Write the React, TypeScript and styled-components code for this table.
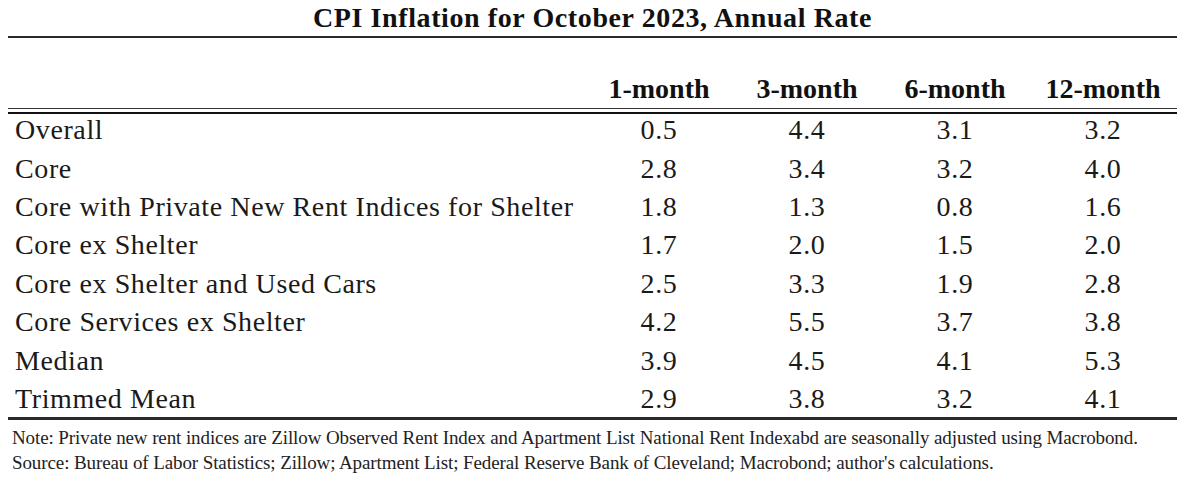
import React from "react";
import styled, { createGlobalStyle } from "styled-components";

interface Row {
  label: string;
  values: string[];
}

const serif = `"Liberation Serif", "Times New Roman", serif`;

const GlobalStyle = createGlobalStyle`
  html, body {
    margin: 0;
    padding: 0;
    background: #ffffff;
  }
`;

const Page = styled.div`
  width: 1186px;
  height: 490px;
  padding: 0 9px 0 8px;
  box-sizing: border-box;
  overflow: hidden;
  font-family: ${serif};
  color: #1a1a1a;
`;

const Title = styled.h1`
  margin: 0;
  height: 36px;
  font-family: ${serif};
  font-size: 28px;
  font-weight: bold;
  line-height: 36px;
  letter-spacing: 0.6px;
  text-align: center;
  color: #111;
`;

const Rule = styled.div<{ $thick?: number }>`
  height: ${(p) => p.$thick || 1}px;
  background: #2a2a2a;
`;

const DoubleRule = styled.div`
  border-top: 1px solid #333;
  border-bottom: 2px solid #111;
  height: 3px;
`;

const Grid = styled.div`
  display: grid;
  grid-template-columns: 577px repeat(4, 148px);
`;

const HeadRow = styled(Grid)`
  height: 70px;
  align-items: end;
`;

const HeadCell = styled.div`
  font-family: ${serif};
  font-size: 28px;
  font-weight: bold;
  text-align: center;
  line-height: 32px;
  padding-bottom: 3px;
  color: #111;
`;

const Body = styled.div`
  height: 303px;
`;

const BodyRow = styled(Grid)`
  height: 38.4px;
  padding-bottom: 6px;
  box-sizing: border-box;
  align-items: center;
`;

const Label = styled.div`
  padding-left: 7px;
  font-family: ${serif};
  font-size: 28px;
  line-height: 30px;
  letter-spacing: 0.6px;
  white-space: nowrap;
`;

const Value = styled.div`
  font-family: ${serif};
  font-size: 28px;
  line-height: 30px;
  letter-spacing: 0.6px;
  text-align: center;
`;

const Notes = styled.div`
  padding: 5px 0 0 4px;
  font-family: ${serif};
  font-size: 19px;
  line-height: 25px;
  letter-spacing: -0.1px;
  color: #222;
  white-space: nowrap;
`;

const columns = ["1-month", "3-month", "6-month", "12-month"];

const rows: Row[] = [
  { label: "Overall", values: ["0.5", "4.4", "3.1", "3.2"] },
  { label: "Core", values: ["2.8", "3.4", "3.2", "4.0"] },
  {
    label: "Core with Private New Rent Indices for Shelter",
    values: ["1.8", "1.3", "0.8", "1.6"],
  },
  { label: "Core ex Shelter", values: ["1.7", "2.0", "1.5", "2.0"] },
  {
    label: "Core ex Shelter and Used Cars",
    values: ["2.5", "3.3", "1.9", "2.8"],
  },
  { label: "Core Services ex Shelter", values: ["4.2", "5.5", "3.7", "3.8"] },
  { label: "Median", values: ["3.9", "4.5", "4.1", "5.3"] },
  { label: "Trimmed Mean", values: ["2.9", "3.8", "3.2", "4.1"] },
];

export default function App() {
  return (
    <Page>
      <GlobalStyle />
      <Title>CPI Inflation for October 2023, Annual Rate</Title>
      <Rule $thick={2} />
      <HeadRow>
        <div />
        {columns.map((c) => (
          <HeadCell key={c}>{c}</HeadCell>
        ))}
      </HeadRow>
      <DoubleRule />
      <Body>
        {rows.map((r) => (
          <BodyRow key={r.label}>
            <Label>{r.label}</Label>
            {r.values.map((v, i) => (
              <Value key={i}>{v}</Value>
            ))}
          </BodyRow>
        ))}
      </Body>
      <Rule $thick={3} />
      <Notes>
        Note: Private new rent indices are Zillow Observed Rent Index and
        Apartment List National Rent Indexabd are seasonally adjusted using
        Macrobond.
        <br />
        Source: Bureau of Labor Statistics; Zillow; Apartment List; Federal
        Reserve Bank of Cleveland; Macrobond; author's calculations.
      </Notes>
    </Page>
  );
}
